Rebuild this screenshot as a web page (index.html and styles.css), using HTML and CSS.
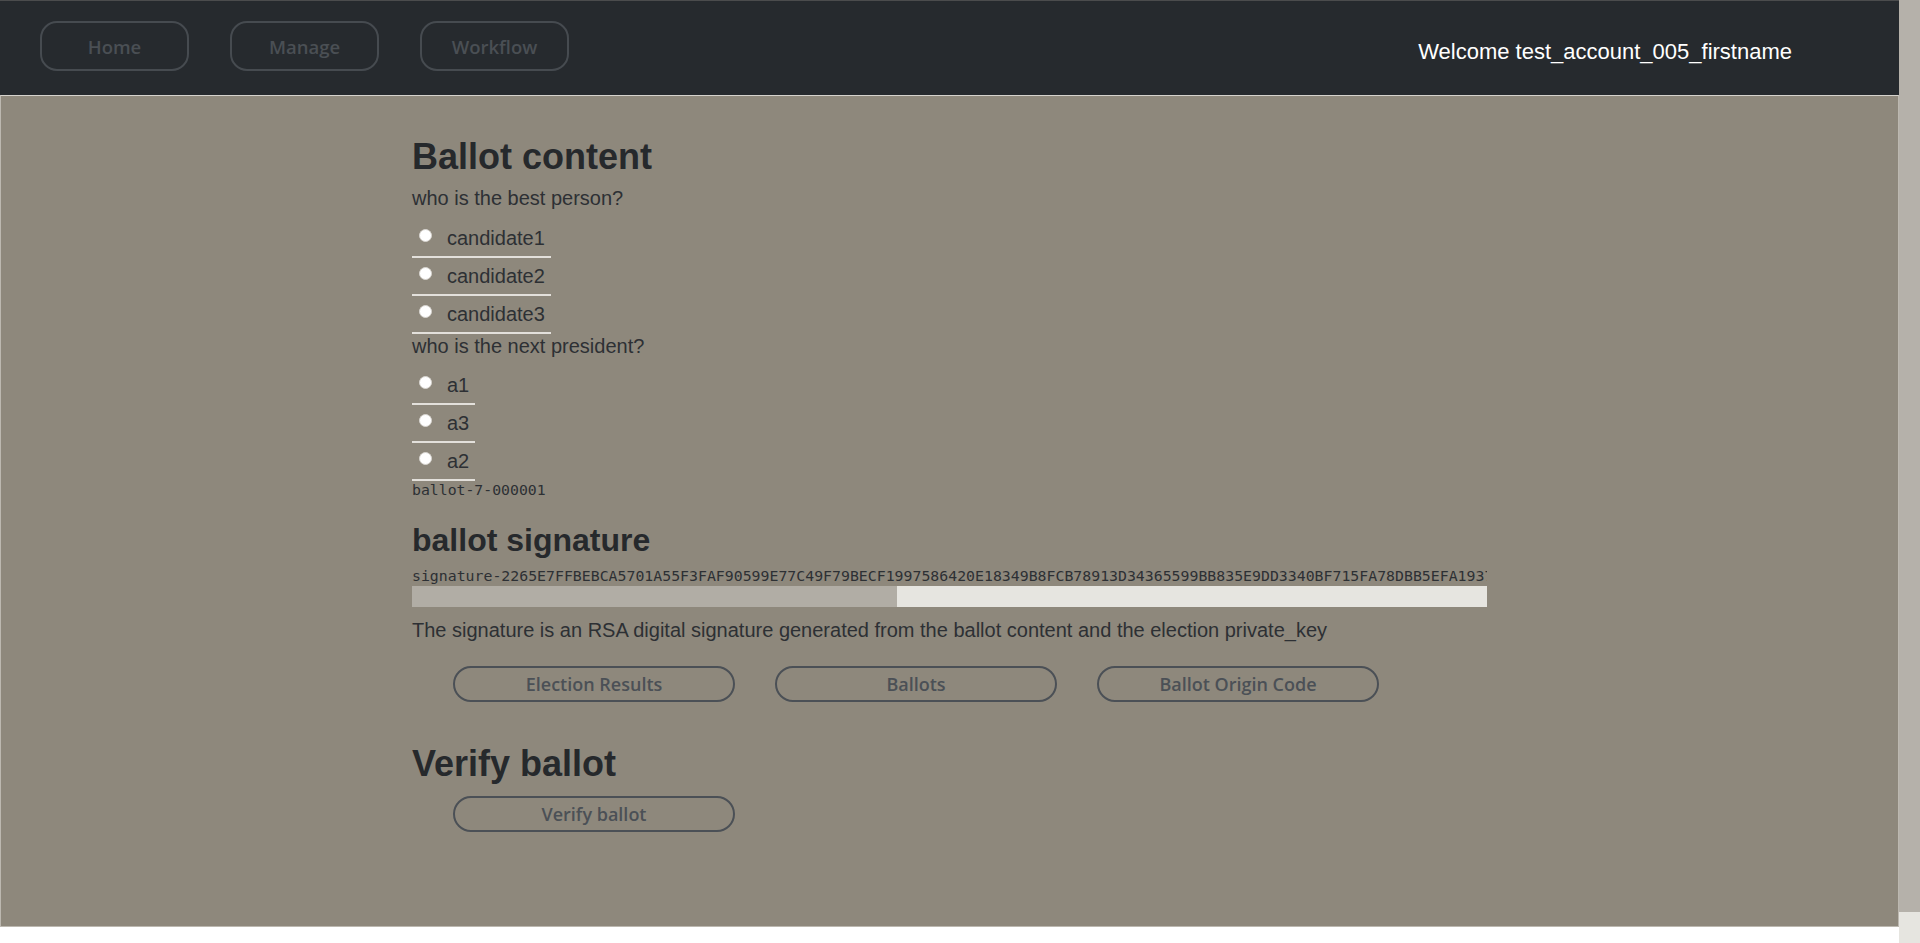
FILE: index.html
```html
<!DOCTYPE html>
<html lang="en">
<head>
<meta charset="utf-8">
<title>Ballot</title>
<link rel="stylesheet" href="styles.css">
</head>
<body>
<div class="page">
  <div class="doc">
    <header class="navbar">
      <nav class="nav-links">
        <a class="nav-btn" href="#">Home</a>
        <a class="nav-btn" href="#">Manage</a>
        <a class="nav-btn" href="#">Workflow</a>
      </nav>
      <div class="welcome">Welcome test_account_005_firstname</div>
    </header>
    <main class="main">
      <div class="container">
        <h2 class="title">Ballot content</h2>

        <p class="q-text">who is the best person?</p>
        <label class="option"><input class="radio" type="radio" name="q1"><span class="opt-text">candidate1</span></label>
        <label class="option"><input class="radio" type="radio" name="q1"><span class="opt-text">candidate2</span></label>
        <label class="option"><input class="radio" type="radio" name="q1"><span class="opt-text">candidate3</span></label>

        <p class="q-text">who is the next president?</p>
        <label class="option"><input class="radio" type="radio" name="q2"><span class="opt-text">a1</span></label>
        <label class="option"><input class="radio" type="radio" name="q2"><span class="opt-text">a3</span></label>
        <label class="option"><input class="radio" type="radio" name="q2"><span class="opt-text">a2</span></label>

        <div class="ballot-id">ballot-7-000001</div>

        <h3 class="subtitle">ballot signature</h3>
        <div class="sig-box">
          <div class="sig-text">signature-2265E7FFBEBCA5701A55F3FAF90599E77C49F79BECF1997586420E18349B8FCB78913D34365599BB835E9DD3340BF715FA78DBB5EFA1937C2A0D4E6B81F93A57C0E24D8B6F1A39C5E7024B8D6F1C3A5E709B2D4F61A8C3E5072B9D4F6A1C8E3057B2D9F4A6C1E8305B7D2F9A4C6E1</div>
          <div class="hscroll"><div class="hthumb" style="width:45.1%"></div></div>
        </div>
        <p class="desc">The signature is an RSA digital signature generated from the ballot content and the election private_key</p>

        <div class="btn-row">
          <button class="pill-btn" type="button">Election Results</button>
          <button class="pill-btn" type="button">Ballots</button>
          <button class="pill-btn" type="button">Ballot Origin Code</button>
        </div>

        <h2 class="title verify-title">Verify ballot</h2>
        <div class="btn-row verify-row">
          <button class="pill-btn" type="button">Verify ballot</button>
        </div>
      </div>
    </main>
  </div>
  <div class="vscroll">
    <div class="vthumb"></div>
    <div class="vtrack"></div>
  </div>
</div>
</body>
</html>
```

FILE: styles.css
```css
* {
  box-sizing: border-box;
}

html, body {
  margin: 0;
  padding: 0;
  background: #ffffff;
}

body {
  font-family: "Liberation Sans", Arial, sans-serif;
  color: #2d3034;
}

.page {
  display: flex;
  width: 1920px;
  height: 943px;
  overflow: hidden;
}

.doc {
  flex: 1;
  display: flex;
  flex-direction: column;
  min-width: 0;
}

/* ---------- navbar ---------- */
.navbar {
  height: 95px;
  flex: none;
  background: #262a2e;
  border-top: 1px solid #4b4c4d;
  display: flex;
  align-items: flex-start;
  justify-content: space-between;
  padding: 20px 107px 0 40px;
}

.nav-links {
  display: flex;
  gap: 41px;
}

.nav-btn {
  width: 149px;
  height: 50px;
  border: 2px solid #464b50;
  border-radius: 17px;
  display: flex;
  align-items: center;
  justify-content: center;
  font-family: "Open Sans", "Noto Sans", sans-serif;
  font-size: 18.5px;
  font-weight: 600;
  color: #4a4f54;
  text-decoration: none;
}

.welcome {
  margin-top: 18px;
  font-size: 22px;
  line-height: 26px;
  color: #ffffff;
}

/* ---------- main ---------- */
.main {
  height: 832px;
  flex: none;
  background: #8e887c;
  border: 1px solid #bcb8b0;
  border-top-color: #d6d3cd;
  padding-top: 39px;
}

.container {
  width: 1075px;
  margin: 0 auto;
}

.title {
  margin: 0;
  font-size: 36px;
  line-height: 43px;
  font-weight: bold;
  color: #26292c;
}

.q-text {
  margin: 8px 0 10px;
  font-size: 20px;
  line-height: 24px;
}

.title + .q-text {
  margin-top: 8px;
}

.option + .q-text {
  margin-top: 0;
  margin-bottom: 9px;
}

.option {
  display: flex;
  align-items: flex-start;
  width: fit-content;
  height: 38px;
  padding-right: 6px;
  border-bottom: 2px solid #e3e0db;
  cursor: pointer;
}

.radio {
  appearance: none;
  -webkit-appearance: none;
  margin: 9px 15px 0 7px;
  width: 13px;
  height: 13px;
  border-radius: 50%;
  background: #ffffff;
  border: 1px solid #d9d6d1;
  flex: none;
}

.opt-text {
  margin-top: 3px;
  font-size: 20px;
  line-height: 30px;
}

.ballot-id {
  font-family: "DejaVu Sans Mono", "Liberation Mono", monospace;
  font-size: 14.8px;
  line-height: 18px;
  color: #2d3034;
}

.subtitle {
  margin: 22px 0 0;
  font-size: 32px;
  line-height: 38px;
  font-weight: bold;
  color: #26292c;
}

.sig-box {
  margin-top: 8px;
}

.sig-text {
  font-family: "DejaVu Sans Mono", "Liberation Mono", monospace;
  font-size: 14.85px;
  line-height: 19px;
  white-space: nowrap;
  overflow: hidden;
  color: #2d3034;
}

.hscroll {
  height: 21px;
  background: #e6e5e0;
}

.hthumb {
  height: 100%;
  background: #b1ada5;
}

.desc {
  margin: 8px 0 0;
  font-size: 20px;
  line-height: 30px;
}

.btn-row {
  display: flex;
  gap: 40px;
  padding-left: 41px;
  margin-top: 21px;
}

.pill-btn {
  width: 282px;
  height: 36px;
  border: 2px solid #4b5056;
  border-radius: 18px;
  background: transparent;
  font-family: "Open Sans", "Noto Sans", sans-serif;
  font-size: 18px;
  font-weight: 600;
  color: #4b5056;
  padding: 0;
  cursor: pointer;
}

.verify-title {
  margin-top: 40px;
}

.verify-row {
  margin-top: 11px;
}

/* ---------- page scrollbar ---------- */
.vscroll {
  width: 21px;
  flex: none;
  display: flex;
  flex-direction: column;
}

.vthumb {
  height: 912px;
  flex: none;
  background: #b5b1aa;
}

.vtrack {
  flex: 1;
  background: #e6e5e0;
}
```
